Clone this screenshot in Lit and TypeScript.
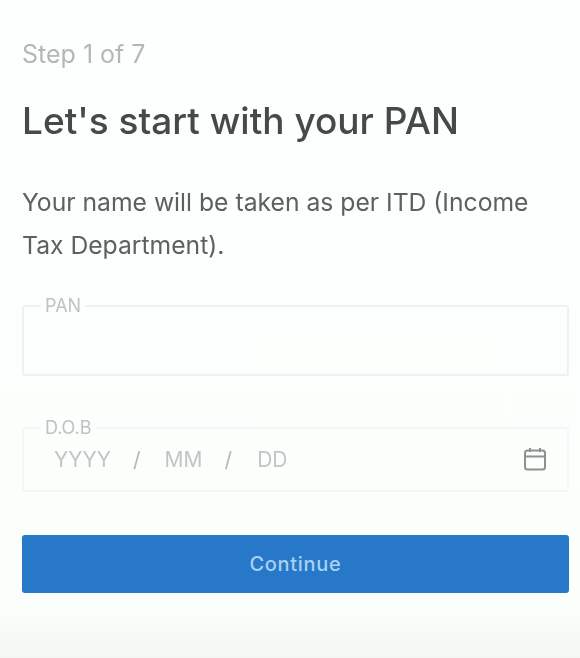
import { LitElement, html, css } from "lit";
import { customElement } from "lit/decorators.js";

@customElement("app-root")
export class AppRoot extends LitElement {
  static styles = css`
    :host {
      display: block;
      width: 580px;
      height: 658px;
      overflow: hidden;
      font-family: Inter, "Liberation Sans", sans-serif;
      background: linear-gradient(180deg, #fbfffd 0%, #fbfffc 92%, #f3f6f3 100%);
    }
    .page {
      box-sizing: border-box;
      height: 658px;
      padding: 39px 11px 0 22px;
      display: flex;
      flex-direction: column;
      filter: blur(0.6px);
    }
    .step {
      font-size: 25px;
      line-height: 30px;
      color: #b4b7b6;
      margin: 0;
    }
    h1 {
      font-size: 37px;
      line-height: 44px;
      font-weight: 500;
      color: #454a49;
      margin: 30px 0 0;
    }
    .desc {
      font-size: 24.7px;
      line-height: 43px;
      color: #5c6160;
      margin: 38px 0 0;
    }
    fieldset {
      margin: 0;
      padding: 0;
      min-width: 0;
      border-radius: 3px;
      display: block;
      box-sizing: border-box;
    }
    .pan {
      margin-top: 30px;
      height: 79px;
      border: 2px solid #eef1ef;
    }
    .dob {
      margin-top: 43px;
      height: 73px;
      border: 2px solid #f4f7f5;
    }
    legend {
      font-size: 18px;
      line-height: 18px;
      color: #bfc2c1;
      padding: 0 4px;
      margin-left: 17px;
    }
    .row {
      display: flex;
      align-items: center;
      height: 44px;
      padding: 0 20px 0 30px;
      color: #c2c5c4;
      font-size: 21px;
    }
    .row .slash { margin: 0 0 0 22px; color: #b4b7b6; }
    .row .mm { margin-left: 24px; }
    .row .dd { margin-left: 25px; }
    .row svg { margin-left: auto; color: #8c918f; }
    button {
      margin-top: 43px;
      height: 58px;
      border: none;
      border-radius: 3px;
      background: #2778c9;
      color: #a6d2f4;
      font: 500 20px Inter, "Liberation Sans", sans-serif;
      letter-spacing: 0.7px;
      padding: 0;
    }
  `;

  render() {
    return html`
      <div class="page">
        <p class="step">Step 1 of 7</p>
        <h1>Let's start with your PAN</h1>
        <p class="desc">Your name will be taken as per ITD (Income Tax Department).</p>
        <fieldset class="pan"><legend>PAN</legend></fieldset>
        <fieldset class="dob">
          <legend>D.O.B</legend>
          <div class="row">
            <span>YYYY</span><span class="slash">/</span>
            <span class="mm">MM</span><span class="slash">/</span>
            <span class="dd">DD</span>
            <svg width="24" height="24" viewBox="0 0 24 24" fill="none" stroke="currentColor" stroke-width="2" stroke-linejoin="round">
              <rect x="2" y="3.5" width="20" height="19" rx="2.5"></rect>
              <path d="M2 9.5h20M7 1v4M17 1v4"></path>
            </svg>
          </div>
        </fieldset>
        <button>Continue</button>
      </div>
    `;
  }
}
